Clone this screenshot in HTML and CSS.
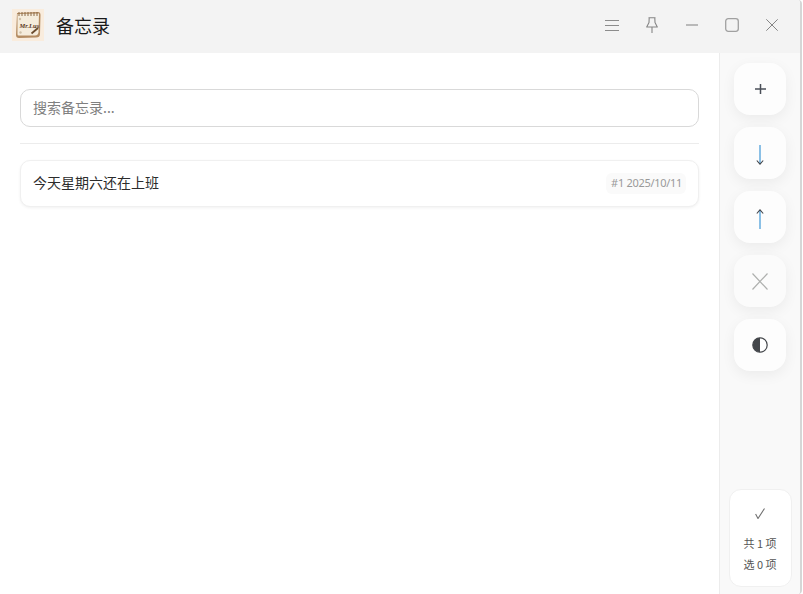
FILE: index.html
```html
<!DOCTYPE html>
<html lang="zh">
<head>
<meta charset="utf-8">
<title>备忘录</title>
<link rel="stylesheet" href="styles.css">
</head>
<body>
<div class="window">
  <header class="titlebar">
    <div class="brand">
      <svg class="logo" viewBox="0 0 32 32" width="32" height="32">
        <rect width="32" height="32" fill="#f9ecdd"/>
        <path d="M5 4 L26 3 Q28.500 3 28.500 6 L28 25 Q28 28.500 24 28.500 L7 29 Q4 29 4 26 Z" fill="#b48c62"/>
        <path d="M5.500 5 L27 4.500 L26.500 23 Q26 26.500 23 26.500 L6.500 26.500 Q5.500 26.500 5.500 25 Z" fill="#f5ecdc"/>
        <path d="M7 3v4M10 3v4M13 3v4M16 3v4M19 3v4M22 3v4M25 3v4" stroke="#8a6844" stroke-width="1"/>
        <text class="logo-text" x="7.500" y="18.500">Mr.Lus</text>
        <path d="M19.500 24.500 L26 19" stroke="#6a4a2c" stroke-width="1.800"/>
        <circle cx="8" cy="10" r="1.200" fill="#cfc0a8"/>
        <circle cx="8.500" cy="23.500" r="1.200" fill="#cfc0a8"/>
      </svg>
      <span class="app-title">备忘录</span>
    </div>
    <div class="win-controls">
      <button class="win-btn">
        <svg viewBox="0 0 14 12" width="14" height="12"><path d="M0 1.500h14M0 6.500h14M0 11.500h14" stroke="#8c8c8c" stroke-width="1" fill="none"/></svg>
      </button>
      <button class="win-btn">
        <svg viewBox="0 0 12 16" width="12" height="16"><path d="M2.500 .7h7M3.200 .7L3 5.500 .7 10h10.600L9 5.500 8.800 .7M6 10v6" stroke="#858585" stroke-width="1.100" fill="none" stroke-linejoin="round"/></svg>
      </button>
      <button class="win-btn">
        <svg viewBox="0 0 12 2" width="12" height="2"><path d="M0 1h12" stroke="#a0a0a0" stroke-width="1.400" fill="none"/></svg>
      </button>
      <button class="win-btn">
        <svg viewBox="0 0 14 14" width="14" height="14"><rect x=".700" y=".700" width="12.600" height="12.600" rx="2.500" stroke="#a0a0a0" stroke-width="1.300" fill="none"/></svg>
      </button>
      <button class="win-btn">
        <svg viewBox="0 0 12 12" width="12" height="12"><path d="M.300 .300l11.400 11.400M11.700 .300L.300 11.700" stroke="#858585" stroke-width="1" fill="none"/></svg>
      </button>
    </div>
  </header>
  <div class="body">
    <main class="content">
      <input class="search" type="text" placeholder="搜索备忘录...">
      <hr class="divider">
      <div class="note">
        <span class="note-text">今天星期六还在上班</span>
        <span class="note-meta">#1 2025/10/11</span>
      </div>
    </main>
    <aside class="sidebar">
      <div class="actions">
        <button class="action">
          <svg viewBox="0 0 11 10" width="11" height="10"><path d="M0 5h11M5.500 0v10" stroke="#4a4f58" stroke-width="1.500" fill="none"/></svg>
        </button>
        <button class="action">
          <svg class="arrow" viewBox="0 0 8 20" width="8" height="20"><path d="M4 0v19" stroke="#5aa5dc" stroke-width="1.400" fill="none"/><path d="M.800 15.500L4 19.200l3.200-3.700" stroke="#43464c" stroke-width="1.100" fill="none"/></svg>
        </button>
        <button class="action">
          <svg class="arrow" viewBox="0 0 8 20" width="8" height="20"><path d="M4 1v19" stroke="#5aa5dc" stroke-width="1.400" fill="none"/><path d="M.800 4.500L4 .800l3.200 3.700" stroke="#43464c" stroke-width="1.100" fill="none"/></svg>
        </button>
        <button class="action action-muted">
          <svg viewBox="0 0 16 17" width="16" height="17"><path d="M.500 .500l15 16M15.500 .500l-15 16" stroke="#aeb0ae" stroke-width="1.200" fill="none"/></svg>
        </button>
        <button class="action">
          <svg viewBox="0 0 16 16" width="16" height="16"><circle cx="8" cy="8" r="7.200" fill="#fff" stroke="#43464a" stroke-width="1.200"/><path d="M8 .8a7.200 7.200 0 0 0 0 14.400z" fill="#43464a"/></svg>
        </button>
      </div>
      <div class="status">
        <svg class="status-check" viewBox="0 0 10 11" width="10" height="11"><path d="M.600 6L3 10.500 9.500 .500" stroke="#707070" stroke-width="1.100" fill="none"/></svg>
        <span class="status-line">共 1 项</span>
        <span class="status-line">选 0 项</span>
      </div>
    </aside>
  </div>
</div>
</body>
</html>
```
FILE: styles.css
```css
* { box-sizing: border-box; }
html, body { margin: 0; height: 100%; }
body {
  background: #fff;
  font-family: "Noto Sans CJK SC", "Liberation Sans", sans-serif;
  overflow: hidden;
}
.window {
  width: 802px;
  height: 594px;
  display: flex;
  flex-direction: column;
  border-right: 2px solid #d6d6d6;
  border-radius: 0 4px 4px 0;
  overflow: hidden;
}
.titlebar {
  height: 53px;
  flex: none;
  background: #f3f3f3;
  display: flex;
  justify-content: space-between;
  align-items: center;
  padding: 0 8px 3px 12px;
}
.brand { display: flex; align-items: center; gap: 12px; }
.logo { display: block; }
.logo-text {
  font-family: "Liberation Serif", serif;
  font-size: 6.500px;
  font-weight: 700;
  font-style: italic;
  fill: #5a3a1e;
}
.app-title { font-size: 18px; color: #1a1a1a; line-height: 26px; }
.win-controls { display: flex; }
.win-btn {
  width: 40px;
  height: 40px;
  border: 0;
  padding: 0;
  background: none;
  display: flex;
  align-items: center;
  justify-content: center;
}
.body { flex: 1; display: flex; min-height: 0; }
.content {
  flex: 1;
  padding: 36px 20px 0;
  background: #fff;
}
.search {
  display: block;
  width: 100%;
  height: 38px;
  padding: 0 12px 2px;
  border: 1px solid #d9d9d9;
  border-radius: 10px;
  background: #fff;
  font: inherit;
  font-size: 14px;
  color: #333;
  outline: none;
}
.search::placeholder { color: #808080; opacity: 1; }
.divider {
  margin: 16px 0;
  border: 0;
  border-top: 1px solid #ececec;
}
.note {
  height: 47px;
  padding: 0 12px;
  display: flex;
  align-items: center;
  justify-content: space-between;
  background: #fff;
  border: 1px solid #f0f0f0;
  border-radius: 10px;
  box-shadow: 0 1px 3px rgba(0,0,0,.06);
}
.note-text { font-size: 14px; color: #2c2c2c; padding-bottom: 4px; }
.note-meta {
  font-family: "Noto Sans", "Liberation Sans", sans-serif;
  font-size: 11px;
  letter-spacing: -.3px;
  height: 21px;
  line-height: 20px;
  color: #999;
  background: #fafafa;
  border-radius: 6px;
  padding: 0 4px 0 5px;
}
.sidebar {
  width: 81px;
  flex: none;
  background: #f9f9f9;
  border-left: 1px solid #ececec;
  padding: 10px 0 7px;
  display: flex;
  flex-direction: column;
  justify-content: space-between;
  align-items: center;
}
.actions { display: flex; flex-direction: column; gap: 12px; }
.action {
  width: 52px;
  height: 52px;
  border: 0;
  padding: 0;
  border-radius: 16px;
  background: #fdfdfd;
  box-shadow: 0 4px 14px rgba(0,0,0,.06);
  display: flex;
  align-items: center;
  justify-content: center;
}
.arrow { margin-top: 3px; }
.action-muted { background: #fbfbfb; }
.status {
  width: 63px;
  height: 98px;
  background: #fff;
  border: 1px solid #f0f0f0;
  border-radius: 12px;
  display: flex;
  flex-direction: column;
  align-items: center;
  padding-top: 18px;
}
.status-check { display: block; margin-bottom: 14px; }
.status-line { font-size: 11px; line-height: 21px; color: #555; white-space: nowrap; }
```
